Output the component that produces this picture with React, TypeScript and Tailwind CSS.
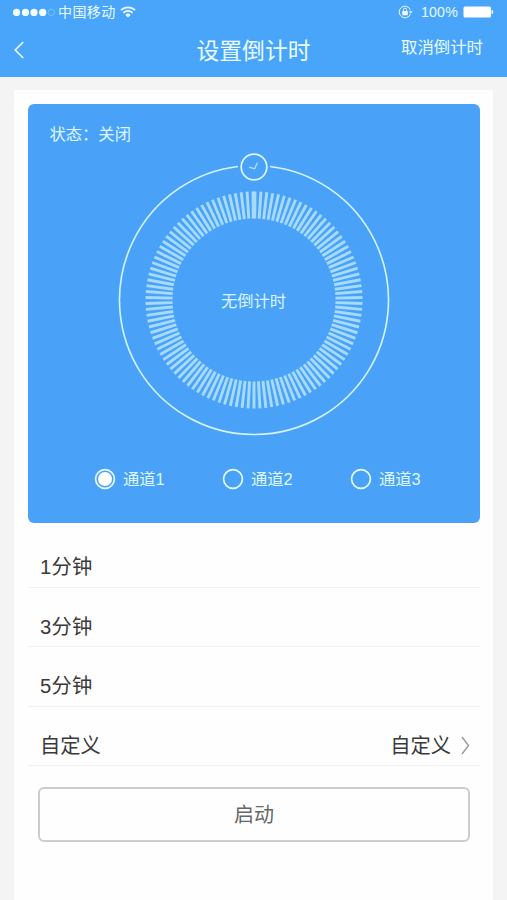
import React, { useState } from 'react'

const CHANNELS = ['通道1', '通道2', '通道3']
const PRESETS = ['1分钟', '3分钟', '5分钟']

// The ring starts and ends half a degree off the top, so both end ticks merge into one thick mark
const TICK_COUNT = 115
const TICK_START = 0.5
const TICK_STEP = (360 - 2 * TICK_START) / (TICK_COUNT - 1)

function StatusBar(): React.JSX.Element {
  return (
    <div className="flex h-6 items-center justify-between pl-[13px] pr-[13px] text-[#e6fbff]">
      <div className="flex items-center">
        <svg width="43" height="10" viewBox="0 0 43 10" fill="none">
          {[3.5, 12.5, 21, 29.7].map(cx => (
            <circle key={cx} cx={cx} cy="5.4" r="3.6" fill="#f4feff" />
          ))}
          <circle cx="38.3" cy="5.4" r="3.2" stroke="#85cdff" strokeWidth="0.7" />
        </svg>
        <span className="ml-[2px] text-[14px] leading-6 tracking-[0.4px]">中国移动</span>
        <svg className="ml-[4px]" width="16" height="12" viewBox="0 0 16 12" fill="none">
          <path d="M1 4.2a10 10 0 0 1 14 0" stroke="currentColor" strokeWidth="1.8" />
          <path d="M3.4 6.8a6.6 6.6 0 0 1 9.2 0" stroke="currentColor" strokeWidth="1.7" />
          <path d="M8 11.4 5.5 8.9a3.5 3.5 0 0 1 5 0z" fill="#fff" />
        </svg>
      </div>
      <div className="flex items-center">
        {/* Rotation lock */}
        <svg width="15" height="14" viewBox="0 0 15 14" fill="none">
          <path d="M12.4 9.2a5.8 5.8 0 1 1 0-4.4" stroke="currentColor" strokeWidth="1" />
          <path d="M10.8 6.2h3.8l-1.9 2.5z" fill="currentColor" />
          <rect x="4.3" y="6" width="5.4" height="4.2" rx="0.4" fill="#fff" />
          <path d="M5.4 6V4.8a1.6 1.6 0 0 1 3.2 0V6" stroke="currentColor" strokeWidth="0.9" />
        </svg>
        <span className="ml-[8px] text-[14.2px] leading-6 tracking-[0.2px]">100%</span>
        <svg className="ml-[5px]" width="31" height="12" viewBox="0 0 31 12">
          <rect x="0.5" y="0.5" width="27.5" height="11" rx="1.5" fill="#fff" />
          <path d="M28.6 3.8a2.3 2.3 0 0 1 0 4.4z" fill="#fff" />
        </svg>
      </div>
    </div>
  )
}

function NavBar(): React.JSX.Element {
  return (
    <div className="grid h-[53px] grid-cols-[1fr_auto_1fr] items-center px-[14px] text-[#e9fcff]">
      <button aria-label="返回" className="pb-[2px]">
        <svg width="11" height="18" viewBox="0 0 11 18" fill="none" stroke="#effdff" strokeWidth="1.6">
          <path d="M9.2 1 1.2 9l8 8" />
        </svg>
      </button>
      <h1 className="text-[22.8px] leading-8">设置倒计时</h1>
      <button className="mr-[10px] justify-self-end pb-[8px] text-[16.4px] leading-6">取消倒计时</button>
    </div>
  )
}

/**
 * Countdown dial: the outer track with its handle at twelve o'clock
 * and the ring of tick marks inside it
 */
function Dial(): React.JSX.Element {
  const ticks = Array.from({ length: TICK_COUNT }, (_, i) => TICK_START + i * TICK_STEP)

  return (
    <svg className="mx-auto block" width="280" height="290" viewBox="-140 -150 280 290" fill="none">
      <path d="M16-133.5A134.5 134.5 0 1 1-16-133.5" stroke="#d3f4ff" strokeWidth="1.6" />
      <circle cy="-133" r="12.8" stroke="#d8f6ff" strokeWidth="1.7" />
      <path d="M-4.8-132.8l5.4 1.6 2.8-6" stroke="#b8e6ff" strokeWidth="1.2" />
      {ticks.map(angle => (
        <line
          key={angle}
          y1="-108.5"
          y2="-81.5"
          stroke="#a6dbff"
          strokeWidth="2.9"
          transform={`rotate(${angle})`}
        />
      ))}
      <text x="-0.5" y="7" textAnchor="middle" fontSize="16.3" fill="#d8f6ff">
        无倒计时
      </text>
    </svg>
  )
}

export default function App(): React.JSX.Element {
  const [channel, setChannel] = useState(0)

  return (
    <div className="flex h-[900px] w-[507px] flex-col overflow-hidden bg-[#f4f4f4] font-['Liberation_Sans','Noto_Sans_CJK_SC',sans-serif]">
      <header className="h-[77px] shrink-0 bg-[#49a5f9]">
        <StatusBar />
        <NavBar />
      </header>

      <main className="mx-[14px] mt-[13px] flex-1 bg-[#fefefe] pl-[14px] pr-[13px] pt-[14px]">
        {/* Dial card */}
        <section className="h-[419px] rounded-[6px] bg-[#49a2f8] pt-[18px] text-[#dff8ff]">
          <p className="pl-[21.5px] text-[16.3px] leading-6">状态：关闭</p>
          <div className="mt-[4px]">
            <Dial />
          </div>
          <div className="mt-[27px] grid grid-cols-[128px_128px_auto] pl-[66px]">
            {CHANNELS.map((name, i) => (
              <button key={name} onClick={() => setChannel(i)} className="flex items-center text-left">
                <svg width="22" height="22" viewBox="0 0 22 22" fill="none">
                  <circle cx="11" cy="11" r="9.4" stroke="#e2faff" strokeWidth="1.7" />
                  {i === channel && <circle cx="11" cy="11" r="7" fill="#fff" />}
                </svg>
                <span className="ml-[7px] text-[16.3px] leading-6">{name}</span>
              </button>
            ))}
          </div>
        </section>

        <ul className="mt-[5px] text-[20.3px] text-[#3a3a3a]">
          {PRESETS.map(label => (
            <li key={label} className="flex h-[59.5px] items-end border-b border-[#f2f2f2] pb-[4.5px] pl-[12px] leading-[30px] tracking-[0.2px]">
              {label}
            </li>
          ))}
          <li className="flex h-[59.5px] items-end justify-between border-b border-[#f2f2f2] pb-[4.5px] pl-[12px] pr-[10px] leading-[30px]">
            <span>自定义</span>
            <span className="flex items-center">
              自定义
              <svg className="ml-[10px]" width="9" height="19" viewBox="0 0 9 19" fill="none" stroke="#999" strokeWidth="1.4">
                <path d="M1 1l6.5 8.5L1 18" />
              </svg>
            </span>
          </li>
        </ul>

        <button className="ml-[10px] mt-[20.5px] block h-[55px] w-[432px] rounded-[6px] border-2 border-[#cbcccd] pt-[2px] text-[20px] text-[#666]">
          启动
        </button>
      </main>
    </div>
  )
}
